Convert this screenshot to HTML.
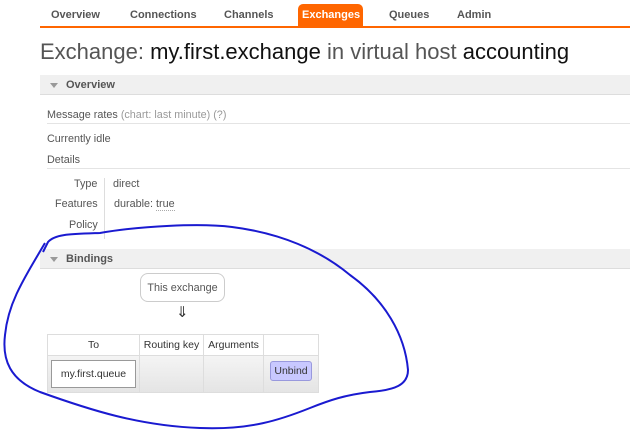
<!DOCTYPE html>
<html><head><style>
body{margin:0;width:630px;height:431px;background:#fff;font-family:"Liberation Sans",Verdana,sans-serif;position:relative;overflow:hidden;color:#444}
.a{position:absolute;white-space:nowrap}
.nav{font-size:11px;font-weight:bold;color:#555;top:9px}
.bar{position:absolute;left:40px;width:590px;height:19px;background:#f0f0f0;border-bottom:1px solid #ddd;font-size:11px;font-weight:bold;color:#555}
.bar span{position:absolute;left:26px;top:4px}
.bar i{position:absolute;left:10px;top:8px;border:4px solid transparent;border-top:5px solid #999;border-bottom:0}
.t{font-size:10.8px;color:#555}
td{padding:0;box-sizing:border-box}
</style></head><body>
<div class="a" style="left:40px;top:26px;width:590px;height:2px;background:#f60"></div>
<div class="a" style="left:298px;top:4px;width:65px;height:23px;background:#f60;border-radius:5px 5px 0 0"></div>
<div class="a nav" style="left:51px">Overview</div>
<div class="a nav" style="left:130px">Connections</div>
<div class="a nav" style="left:224px">Channels</div>
<div class="a nav" style="left:302px;color:#fff">Exchanges</div>
<div class="a nav" style="left:389px">Queues</div>
<div class="a nav" style="left:457px">Admin</div>
<div class="a" style="left:40px;top:39px;font-size:22px;color:#555">Exchange: <span style="color:#111">my.first.exchange</span> in virtual host <span style="color:#111">accounting</span></div>
<div class="bar" style="top:75px"><i></i><span>Overview</span></div>
<div class="a t" style="left:47px;top:109px">Message rates <span style="color:#999">(chart: last minute) (?)</span></div>
<div class="a" style="left:47px;top:123px;width:583px;height:1px;background:#e4e4e4"></div>
<div class="a t" style="left:47px;top:133px">Currently idle</div>
<div class="a t" style="left:47px;top:154px">Details</div>
<div class="a" style="left:47px;top:168px;width:583px;height:1px;background:#e4e4e4"></div>
<div class="a t" style="left:74px;top:178px">Type</div>
<div class="a t" style="left:55px;top:198px">Features</div>
<div class="a t" style="left:69px;top:219px">Policy</div>
<div class="a" style="left:104px;top:178px;width:1px;height:61px;background:#ddd"></div>
<div class="a t" style="left:113px;top:178px">direct</div>
<div class="a t" style="left:114px;top:198px">durable: <span style="border-bottom:1px dotted #aaa">true</span></div>
<div class="bar" style="top:249px"><i></i><span>Bindings</span></div>
<div class="a t" style="left:140px;top:273px;width:83px;height:27px;border:1px solid #ccc;border-radius:8px;text-align:center;line-height:28px">This exchange</div>
<div class="a" style="left:176px;top:303px;font-size:15px;color:#333">⇓</div>
<table class="a" style="left:47px;top:334px;width:271px;table-layout:fixed;border-collapse:collapse;font-size:10.5px;color:#333">
<tr style="height:21px"><td style="width:92px;border:1px solid #ddd;text-align:center">To</td><td style="width:64px;border:1px solid #ddd;text-align:center">Routing key</td><td style="width:60px;border:1px solid #ddd;text-align:center">Arguments</td><td style="width:55px;border:1px solid #ddd"></td></tr>
<tr style="height:37px;background:linear-gradient(#f4f4f4,#e4e4e4)"><td style="border:1px solid #ddd;padding:0 3px"><div style="border:1px solid #999;background:#fff;height:26px;line-height:27px;text-align:center">my.first.queue</div></td><td style="border:1px solid #ddd"></td><td style="border:1px solid #ddd"></td><td style="border:1px solid #ddd;text-align:center;vertical-align:top;padding-top:5px"><span style="display:inline-block;background:#c8c8ff;border:1px solid #99d;border-radius:3px;padding:3px 3px;color:#333">Unbind</span></td></tr>
</table>
<svg class="a" style="left:0;top:0" width="630" height="431"><path d="M43,252 L48,242 C55,234 70,234 100,233 C140,226 200,223 232,227 C280,233 320,250 350,275 C385,300 405,335 408,370 C408,385 395,390 370,392 C345,395 330,400 310,408 C280,420 250,430 200,428 C140,426 90,410 40,392 C10,380 2,360 5,335 C8,305 20,285 45,243" fill="none" stroke="#1a1ad0" stroke-width="2"/></svg>
</body></html>
